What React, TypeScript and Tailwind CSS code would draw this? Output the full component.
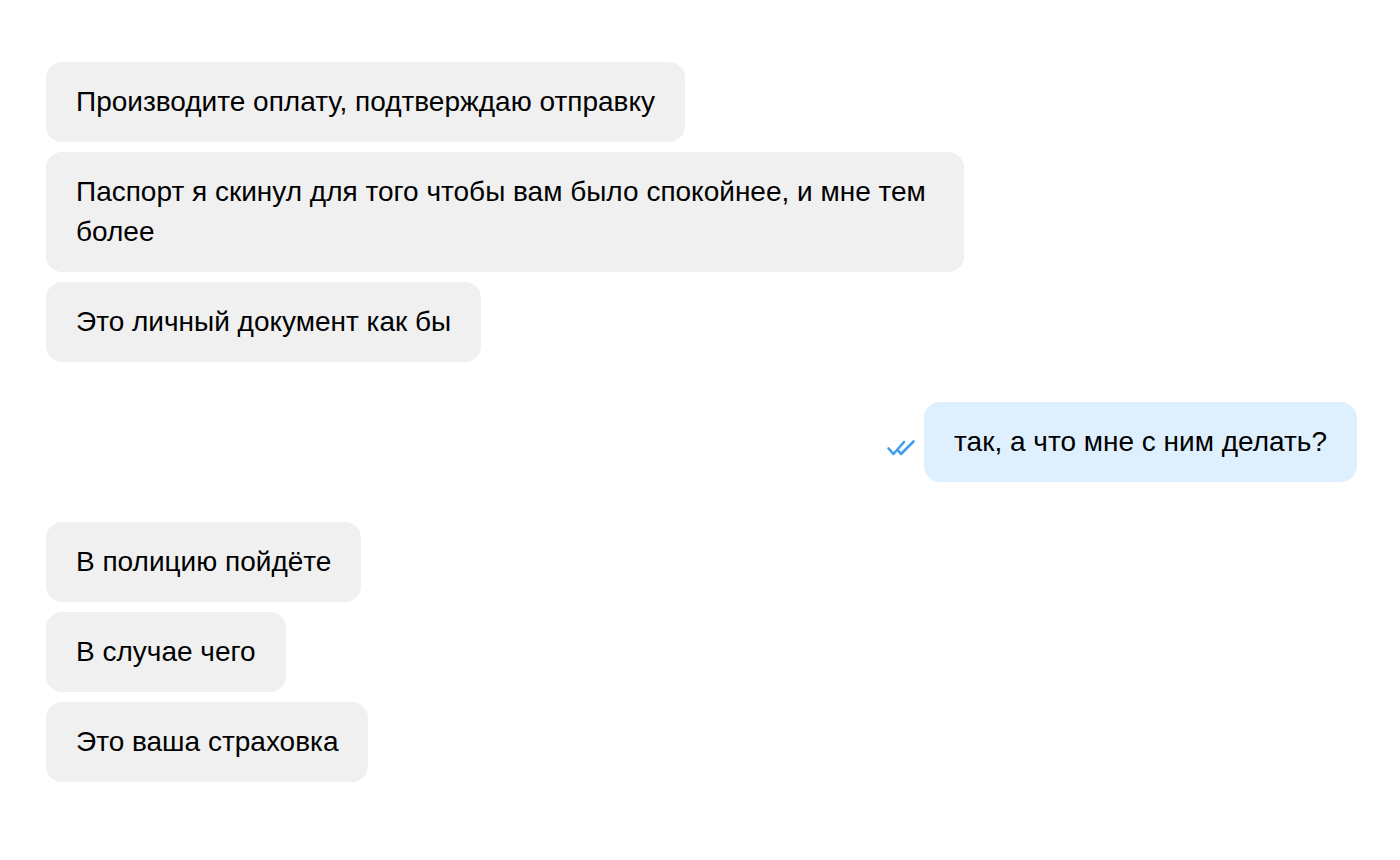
import React from 'react';

const Incoming = ({ text }: { text: string }) => (
  <div className="flex">
    <div className="max-w-[918px] rounded-2xl bg-[#f0f0f0] px-[30px] py-5 text-[28px] leading-[40px] text-black">
      {text}
    </div>
  </div>
);

const DoubleCheck = () => (
  <svg width="30" height="18" viewBox="0 0 30 18" fill="none" stroke="#3f9ef0" strokeWidth="2.6" strokeLinecap="round" strokeLinejoin="round">
    <path d="M2.5 9.5L7.5 15L18 3" />
    <path d="M12.5 12L15 15L27.5 2.5" />
  </svg>
);

const Outgoing = ({ text }: { text: string }) => (
  <div className="flex items-center justify-end gap-2">
    <div className="pt-3">
      <DoubleCheck />
    </div>
    <div className="rounded-2xl bg-[#def0fe] px-[30px] py-5 text-[28px] leading-[40px] text-black">
      {text}
    </div>
  </div>
);

const App = () => {
  return (
    <div className="min-h-[860px] bg-white pt-[62px] pl-[46px] pr-[43px] font-['Liberation_Sans',Arial,sans-serif]">
      <div className="flex flex-col gap-[10px]">
        <Incoming text="Производите оплату, подтверждаю отправку" />
        <Incoming text="Паспорт я скинул для того чтобы вам было спокойнее, и мне тем более" />
        <Incoming text="Это личный документ как бы" />
      </div>
      <div className="mt-10">
        <Outgoing text="так, а что мне с ним делать?" />
      </div>
      <div className="mt-10 flex flex-col gap-[10px]">
        <Incoming text="В полицию пойдёте" />
        <Incoming text="В случае чего" />
        <Incoming text="Это ваша страховка" />
      </div>
    </div>
  );
};

export default App;
